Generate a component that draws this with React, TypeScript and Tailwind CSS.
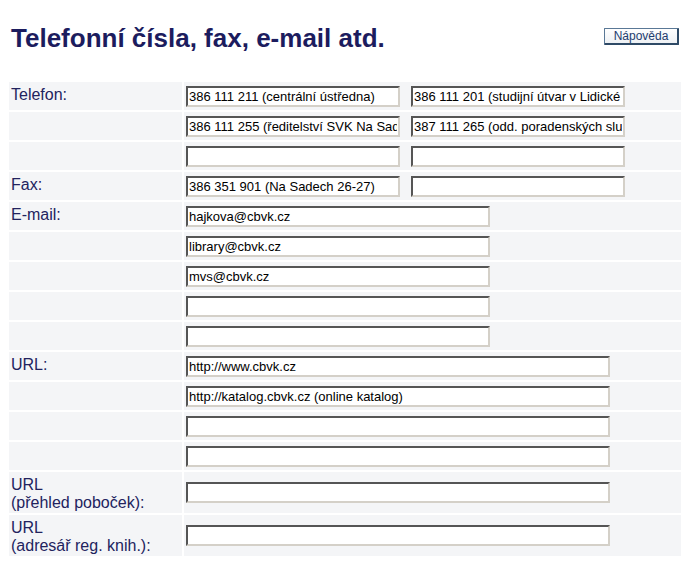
import React from "react";

type Row = {
  label?: string[];
  values: string[];
  width: string;
  tall?: boolean;
};

const rows: Row[] = [
  { label: ["Telefon:"], values: ["386 111 211 (centrální ústředna)", "386 111 201 (studijní útvar v Lidické ulici)"], width: "w-[214px]" },
  { values: ["386 111 255 (ředitelství SVK Na Sadech)", "387 111 265 (odd. poradenských služeb)"], width: "w-[214px]" },
  { values: ["", ""], width: "w-[214px]" },
  { label: ["Fax:"], values: ["386 351 901 (Na Sadech 26-27)", ""], width: "w-[214px]" },
  { label: ["E-mail:"], values: ["hajkova@cbvk.cz"], width: "w-[304px]" },
  { values: ["library@cbvk.cz"], width: "w-[304px]" },
  { values: ["mvs@cbvk.cz"], width: "w-[304px]" },
  { values: [""], width: "w-[304px]" },
  { values: [""], width: "w-[304px]" },
  { label: ["URL:"], values: ["http://www.cbvk.cz"], width: "w-[424px]" },
  { values: ["http://katalog.cbvk.cz (online katalog)"], width: "w-[424px]" },
  { values: [""], width: "w-[424px]" },
  { values: [""], width: "w-[424px]" },
  { label: ["URL", "(přehled poboček):"], values: [""], width: "w-[424px]", tall: true },
  { label: ["URL", "(adresář reg. knih.):"], values: [""], width: "w-[424px]", tall: true },
];

function Field({ value, width }: { value: string; width: string }) {
  return (
    <input
      type="text"
      defaultValue={value}
      className={`${width} h-[21px] bg-white border-2 border-t-[#555555] border-l-[#555555] border-r-[#d4d0c8] border-b-[#d4d0c8] px-[1px] text-[13px] text-black outline-none`}
    />
  );
}

export default function App() {
  return (
    <div className="min-h-[564px] bg-white px-[7px] font-['Liberation_Sans',Arial,sans-serif]">
      {/* Header */}
      <div className="flex items-start justify-between pt-[23px]">
        <h1 className="pl-[4px] text-[26px] leading-[30px] font-bold text-[#1c1c5e]">Telefonní čísla, fax, e-mail atd.</h1>
        <button className="mt-[5px] h-[17px] w-[75px] rounded-[1px] border border-[#5a7896] border-b-2 border-r-2 border-b-[#2e4a66] border-r-[#2e4a66] bg-gradient-to-b from-white to-[#eef1f4] text-[12px] leading-[13px] text-[#1e3c6e]">
          Nápověda
        </button>
      </div>

      {/* Form table */}
      <div className="mt-[27px] grid grid-cols-[173px_497px] gap-[2px] p-[2px]">
        {rows.map((row, i) => (
          <React.Fragment key={i}>
            <div className={`${row.tall ? "h-[41px]" : "h-[28px]"} bg-[#f4f5f7] px-[2px] pt-[4px] text-[16px] leading-[18px] text-[#22235e]`}>
              {row.label?.map((l) => (
                <div key={l}>{l}</div>
              ))}
            </div>
            <div className={`${row.tall ? "h-[41px]" : "h-[28px]"} flex items-center gap-[11px] bg-[#f4f5f7] px-[2px]`}>
              {row.values.map((v, j) => (
                <Field key={j} value={v} width={row.width} />
              ))}
            </div>
          </React.Fragment>
        ))}
      </div>
    </div>
  );
}
